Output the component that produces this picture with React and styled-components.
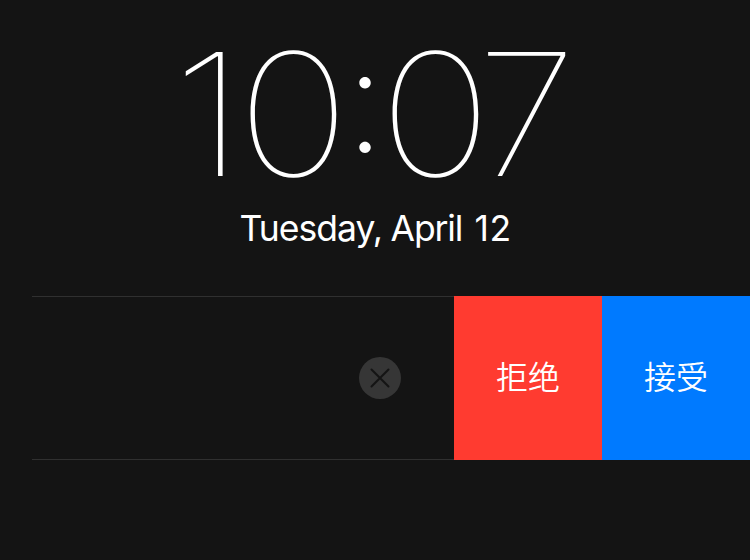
import React from "react";
import styled, { createGlobalStyle } from "styled-components";

const GlobalStyle = createGlobalStyle`
  body { margin: 0; background: #141414; }
`;

const Screen = styled.main`
  width: 750px;
  height: 560px;
  box-sizing: border-box;
  background: #141414;
  color: #fff;
  overflow: hidden;
  font-family: Inter, "Noto Sans CJK SC", sans-serif;
  display: flex;
  flex-direction: column;
`;

const Clock = styled.time`
  display: flex;
  height: 204px;
  padding: 37px 0 0 175.8px;
  box-sizing: border-box;
  font-size: 170.5px;
  line-height: 154px;
  font-weight: 110;
  white-space: nowrap;
`;

const Digit = styled.span`
  display: flex;
  justify-content: center;
  flex: none;
  width: ${(p) => p.$width}px;
  transform: scaleX(${(p) => p.$stretch});
`;

const Colon = styled.span`
  display: flex;
  justify-content: center;
  flex: none;
  width: 38.4px;
  font-size: 145px;
  font-weight: 155;
  line-height: 125px;
`;

const DateLabel = styled.div`
  display: flex;
  padding-left: 239.5px;
  height: 92px;
  font-size: 35.5px;
  line-height: 50px;
  white-space: nowrap;
`;

const Word = styled.span`
  flex: none;
  width: ${(p) => p.$width}px;
  letter-spacing: ${(p) => p.$tracking}px;
`;

const Notification = styled.section`
  display: flex;
  height: 164px;
  padding-left: 32px;
`;

const Body = styled.div`
  flex: 1;
  display: flex;
  align-items: center;
  justify-content: flex-end;
  padding-right: 53px;
  border-top: 1px solid #303030;
  border-bottom: 1px solid #303030;
`;

const Dismiss = styled.button`
  width: 42px;
  height: 42px;
  padding: 0;
  border: 0;
  border-radius: 50%;
  background: #363636;
  display: grid;
  place-items: center;
`;

const Action = styled.button`
  width: 148px;
  padding: 0 0 6px;
  border: 0;
  color: #fff;
  background: ${(p) => p.$color};
  font-family: "Noto Sans CJK SC", sans-serif;
  font-size: 32px;
  font-weight: 350;
`;

export default function App() {
  return (
    <Screen>
      <GlobalStyle />
      <Clock>
        <Digit $width={65} $stretch={1.18}>1</Digit>
        <Digit $width={105} $stretch={1.125}>0</Digit>
        <Colon>:</Colon>
        <Digit $width={102.6} $stretch={1.125}>0</Digit>
        <Digit $width={79.4} $stretch={1.07}>7</Digit>
      </Clock>
      <DateLabel>
        <Word $width={151} $tracking={-1}>Tuesday,</Word>
        <Word $width={84} $tracking={-1.1}>April</Word>
        <Word $width={40} $tracking={0.5}>12</Word>
      </DateLabel>
      <Notification>
        <Body>
          <Dismiss aria-label="Dismiss">
            <svg width="20" height="20" viewBox="0 0 20 20" fill="none" stroke="#141414" strokeWidth="2" strokeLinecap="round">
              <path d="M1.5 1.5L18.5 18.5M18.5 1.5L1.5 18.5" />
            </svg>
          </Dismiss>
        </Body>
        <Action $color="#ff3b30">拒绝</Action>
        <Action $color="#007aff">接受</Action>
      </Notification>
    </Screen>
  );
}
